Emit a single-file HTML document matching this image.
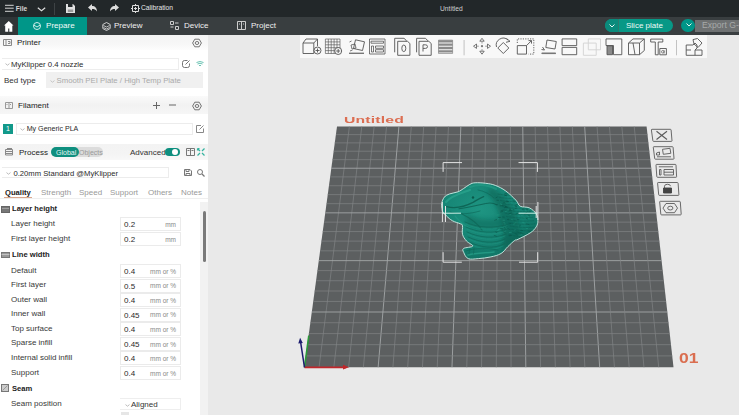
<!DOCTYPE html>
<html><head><meta charset="utf-8">
<style>
*{margin:0;padding:0;box-sizing:border-box}
html,body{width:739px;height:415px;overflow:hidden;background:#e9e9e9;font-family:"Liberation Sans",sans-serif;position:relative}
.a{position:absolute}
.wt{position:absolute;color:#e8e8e8;font-size:8px;white-space:nowrap;line-height:1}
.t{position:absolute;font-size:8px;color:#333;white-space:nowrap;line-height:1}
.inp{position:absolute;left:120px;width:61px;height:14px;border:1px solid #ebebeb;background:#fff}
.inp .v{position:absolute;left:3px;top:3px;font-size:8px;color:#2a2a2a;line-height:1}
.inp .u{position:absolute;right:4px;top:3.5px;font-size:6.5px;color:#888;line-height:1}
svg{position:absolute;overflow:visible}
</style></head><body>
<!-- title bar -->
<div class="a" style="left:0;top:0;width:739px;height:17px;background:#222729"></div>
<svg style="left:5px;top:4px" width="10" height="9"><path d="M0 1.3h8.7M0 4.2h8.7M0 7.3h8.7" stroke="#e8e8e8" stroke-width="0.9"/></svg>
<div class="wt" style="left:15.8px;top:5.5px;font-size:6.6px;font-weight:bold;color:#d8d8d8">File</div>
<svg style="left:37px;top:6.5px" width="10" height="5"><path d="M0.8 0.8l3.7 3 3.7-3" stroke="#e0e0e0" stroke-width="1.1" fill="none"/></svg>
<div class="a" style="left:54px;top:3px;width:1px;height:11.5px;background:#3e4345"></div>
<svg style="left:66px;top:4px" width="9" height="9"><path d="M0 0h7l2 2v7h-9z" fill="#e0e0e0"/><path d="M2 0v3h4.5v-3z" fill="#222729"/><path d="M1.8 5.5h5.4v2.5h-5.4z" fill="#999"/></svg>
<svg style="left:88px;top:4px" width="9" height="8"><path d="M0 3.5l4-3.5v2c3 0 5 2 5 5.5c-1-2-3-2.5-5-2.5v2z" fill="#ddd"/></svg>
<svg style="left:110px;top:4px" width="9" height="8"><path d="M9 3.5l-4-3.5v2c-3 0-5 2-5 5.5c1-2 3-2.5 5-2.5v2z" fill="#ddd"/></svg>
<svg style="left:131px;top:4px" width="9" height="9"><path d="M1.5 1.5h6v6h-6z M4.5 0v2 M4.5 7v2 M0 4.5h2 M7 4.5h2 M3 4.5h3 M4.5 3v3" stroke="#ddd" stroke-width="1" fill="none"/></svg>
<div class="wt" style="left:141px;top:5px;font-size:6.7px">Calibration</div>
<div class="wt" style="left:440px;top:5.8px;font-size:6.7px;color:#d0d0d0">Untitled</div>

<!-- tab bar -->
<div class="a" style="left:0;top:17px;width:739px;height:18px;background:#393e40"></div>
<div class="a" style="left:0;top:17px;width:18px;height:18px;background:#303537"></div>
<svg style="left:3.5px;top:20.6px" width="10" height="11"><path d="M4.75 0L0 4.6h1.2v6.1h3v-3.2h1.1v3.2h3v-6.1h1.2z" fill="#fff"/></svg>
<div class="a" style="left:18px;top:17px;width:69px;height:18px;background:#009688"></div>
<svg style="left:33px;top:22px" width="8" height="8"><circle cx="4" cy="4" r="3.5" stroke="#cfeee9" stroke-width="1" fill="none"/><path d="M0.8 3l3.2 2 3.2-2" stroke="#cfeee9" stroke-width="1" fill="none"/></svg>
<div class="wt" style="left:46px;top:22px;font-size:8.1px;color:#f2fbfa">Prepare</div>
<svg style="left:102px;top:21.5px" width="9" height="9"><path d="M4.5 0.5l3.7 2v4l-3.7 2-3.7-2v-4z" stroke="#ddd" stroke-width="0.9" fill="none"/><path d="M1.5 3.5l3 1.5 3-1.5 M1.5 5.5l3 1.5 3-1.5" stroke="#ddd" stroke-width="0.8" fill="none"/></svg>
<div class="wt" style="left:114px;top:22px;font-size:8px;color:#f0f0f0">Preview</div>
<svg style="left:170px;top:21px" width="9" height="9"><path d="M0.5 0.5h3v3h-3z M5.5 5.5h3v3h-3z M5 2h3.5 M0.5 6h3" stroke="#ccc" stroke-width="1" fill="none"/></svg>
<div class="wt" style="left:184px;top:22px;font-size:8px;color:#f0f0f0">Device</div>
<svg style="left:237px;top:21px" width="9" height="9"><path d="M0.5 0.5h8v8h-8z M4.5 0.5v8 M2 3h1 M6 3h1" stroke="#ccc" stroke-width="1" fill="none"/></svg>
<div class="wt" style="left:251px;top:22px;font-size:8px;color:#f0f0f0">Project</div>
<!-- slice plate -->
<div class="a" style="left:605px;top:19.3px;width:67.5px;height:12.7px;border-radius:6.5px;background:#079886"></div><div class="a" style="left:605px;top:19.3px;width:13px;height:12.7px;border-radius:6.5px 0 0 6.5px;background:#0a8b7c"></div>
<div class="a" style="left:617.5px;top:19.3px;width:0.8px;height:12.7px;background:#2c7a6e"></div>
<svg style="left:609px;top:24px" width="6" height="4"><path d="M0.5 0.5l2.5 2.5 2.5-2.5" stroke="#e6f5f3" stroke-width="1" fill="none"/></svg>
<div class="wt" style="left:626px;top:21.8px;font-size:8px;color:#eefaf7">Slice plate</div>
<div class="a" style="left:695px;top:19.5px;width:44px;height:12.5px;background:#6e7172"></div>
<div class="a" style="left:681px;top:19px;width:14px;height:13px;border-radius:7px;background:#009688"></div>
<svg style="left:686px;top:23px" width="6" height="4"><path d="M0.5 0.5l2.5 2.5 2.5-2.5" stroke="#e6f5f3" stroke-width="1" fill="none"/></svg>
<div class="wt" style="left:702px;top:21px;font-size:8.6px;color:#a7a9a9">Export G-code</div>

<!-- canvas -->
<svg style="left:0;top:0" width="739" height="415">
<polygon points="337.0,126.5 646.6,126.5 673.5,367.3 304.3,367.3" fill="#5c5f60"/>
<line x1="349.38" y1="126.50" x2="319.07" y2="367.30" stroke="#818485" stroke-width="0.7"/><line x1="335.90" y1="134.63" x2="647.51" y2="134.63" stroke="#818485" stroke-width="0.7"/><line x1="361.77" y1="126.50" x2="333.84" y2="367.30" stroke="#818485" stroke-width="0.7"/><line x1="334.78" y1="142.87" x2="648.43" y2="142.87" stroke="#818485" stroke-width="0.7"/><line x1="374.15" y1="126.50" x2="348.60" y2="367.30" stroke="#818485" stroke-width="0.7"/><line x1="333.64" y1="151.21" x2="649.36" y2="151.21" stroke="#818485" stroke-width="0.7"/><line x1="386.54" y1="126.50" x2="363.37" y2="367.30" stroke="#818485" stroke-width="0.7"/><line x1="332.50" y1="159.67" x2="650.30" y2="159.67" stroke="#818485" stroke-width="0.7"/><line x1="398.92" y1="126.50" x2="378.14" y2="367.30" stroke="#a3a6a7" stroke-width="0.9"/><line x1="331.33" y1="168.23" x2="651.26" y2="168.23" stroke="#a3a6a7" stroke-width="0.9"/><line x1="411.30" y1="126.50" x2="392.91" y2="367.30" stroke="#818485" stroke-width="0.7"/><line x1="330.15" y1="176.92" x2="652.23" y2="176.92" stroke="#818485" stroke-width="0.7"/><line x1="423.69" y1="126.50" x2="407.68" y2="367.30" stroke="#818485" stroke-width="0.7"/><line x1="328.96" y1="185.72" x2="653.22" y2="185.72" stroke="#818485" stroke-width="0.7"/><line x1="436.07" y1="126.50" x2="422.44" y2="367.30" stroke="#818485" stroke-width="0.7"/><line x1="327.75" y1="194.64" x2="654.21" y2="194.64" stroke="#818485" stroke-width="0.7"/><line x1="448.46" y1="126.50" x2="437.21" y2="367.30" stroke="#818485" stroke-width="0.7"/><line x1="326.52" y1="203.68" x2="655.22" y2="203.68" stroke="#818485" stroke-width="0.7"/><line x1="460.84" y1="126.50" x2="451.98" y2="367.30" stroke="#a3a6a7" stroke-width="0.9"/><line x1="325.27" y1="212.85" x2="656.25" y2="212.85" stroke="#a3a6a7" stroke-width="0.9"/><line x1="473.22" y1="126.50" x2="466.75" y2="367.30" stroke="#818485" stroke-width="0.7"/><line x1="324.01" y1="222.14" x2="657.28" y2="222.14" stroke="#818485" stroke-width="0.7"/><line x1="485.61" y1="126.50" x2="481.52" y2="367.30" stroke="#818485" stroke-width="0.7"/><line x1="322.73" y1="231.57" x2="658.34" y2="231.57" stroke="#818485" stroke-width="0.7"/><line x1="497.99" y1="126.50" x2="496.28" y2="367.30" stroke="#818485" stroke-width="0.7"/><line x1="321.43" y1="241.12" x2="659.40" y2="241.12" stroke="#818485" stroke-width="0.7"/><line x1="510.38" y1="126.50" x2="511.05" y2="367.30" stroke="#818485" stroke-width="0.7"/><line x1="320.12" y1="250.82" x2="660.49" y2="250.82" stroke="#818485" stroke-width="0.7"/><line x1="522.76" y1="126.50" x2="525.82" y2="367.30" stroke="#a3a6a7" stroke-width="0.9"/><line x1="318.78" y1="260.65" x2="661.59" y2="260.65" stroke="#a3a6a7" stroke-width="0.9"/><line x1="535.14" y1="126.50" x2="540.59" y2="367.30" stroke="#818485" stroke-width="0.7"/><line x1="317.43" y1="270.62" x2="662.70" y2="270.62" stroke="#818485" stroke-width="0.7"/><line x1="547.53" y1="126.50" x2="555.36" y2="367.30" stroke="#818485" stroke-width="0.7"/><line x1="316.05" y1="280.74" x2="663.83" y2="280.74" stroke="#818485" stroke-width="0.7"/><line x1="559.91" y1="126.50" x2="570.12" y2="367.30" stroke="#818485" stroke-width="0.7"/><line x1="314.66" y1="291.01" x2="664.98" y2="291.01" stroke="#818485" stroke-width="0.7"/><line x1="572.30" y1="126.50" x2="584.89" y2="367.30" stroke="#818485" stroke-width="0.7"/><line x1="313.25" y1="301.43" x2="666.14" y2="301.43" stroke="#818485" stroke-width="0.7"/><line x1="584.68" y1="126.50" x2="599.66" y2="367.30" stroke="#a3a6a7" stroke-width="0.9"/><line x1="311.81" y1="312.00" x2="667.32" y2="312.00" stroke="#a3a6a7" stroke-width="0.9"/><line x1="597.06" y1="126.50" x2="614.43" y2="367.30" stroke="#818485" stroke-width="0.7"/><line x1="310.35" y1="322.73" x2="668.52" y2="322.73" stroke="#818485" stroke-width="0.7"/><line x1="609.45" y1="126.50" x2="629.20" y2="367.30" stroke="#818485" stroke-width="0.7"/><line x1="308.87" y1="333.62" x2="669.74" y2="333.62" stroke="#818485" stroke-width="0.7"/><line x1="621.83" y1="126.50" x2="643.96" y2="367.30" stroke="#818485" stroke-width="0.7"/><line x1="307.37" y1="344.68" x2="670.97" y2="344.68" stroke="#818485" stroke-width="0.7"/><line x1="634.22" y1="126.50" x2="658.73" y2="367.30" stroke="#818485" stroke-width="0.7"/><line x1="305.85" y1="355.90" x2="672.23" y2="355.90" stroke="#818485" stroke-width="0.7"/>
</svg>
<svg style="left:0;top:0" width="739" height="415">
<defs><filter id="bl" x="-20%" y="-20%" width="140%" height="140%"><feGaussianBlur stdDeviation="2"/></filter><clipPath id="mc"><path d="M442.2,209.8 C442.0,208.3 441.3,205.8 441.7,203.5 C442.1,201.2 443.0,198.8 444.4,197.1 C445.8,195.4 447.2,194.9 449.7,193.9 C452.2,192.9 455.6,192.8 458.1,191.8 C460.6,190.8 461.4,189.9 463.5,188.6 C465.6,187.3 467.7,185.4 469.8,184.4 C471.9,183.4 472.2,183.0 475.1,182.8 C478.0,182.6 482.1,182.8 485.7,183.3 C489.3,183.8 491.7,184.0 495.3,185.4 C498.9,186.8 502.1,188.3 505.8,191.0 C509.5,193.7 513.4,197.6 516.0,200.3 C518.6,203.0 517.8,204.8 520.2,206.2 C522.6,207.6 526.5,206.5 529.4,207.9 C532.3,209.3 534.7,211.5 536.2,213.8 C537.7,216.1 537.9,218.1 537.9,220.5 C537.9,222.9 537.6,224.7 536.2,226.9 C534.8,229.1 533.5,230.7 530.2,232.9 C526.9,235.1 520.8,237.9 518.0,239.3 C515.2,240.7 516.4,239.2 514.6,240.5 C512.8,241.8 510.2,244.4 507.8,246.7 C505.4,249.0 504.1,251.7 501.0,253.5 C497.9,255.3 494.9,256.0 490.8,256.9 C486.7,257.8 482.5,258.3 478.4,258.6 C474.3,258.9 470.8,259.7 468.2,258.6 C465.6,257.5 464.5,254.2 463.7,252.4 C462.9,250.6 462.1,249.5 463.7,248.4 C465.3,247.3 472.2,247.4 472.7,246.1 C473.2,244.8 468.3,243.1 466.5,241.0 C464.7,238.9 463.2,237.0 462.5,234.3 C461.8,231.6 462.9,227.7 462.5,225.8 C462.1,223.9 462.2,224.7 460.4,223.8 C458.6,222.9 455.0,222.2 452.5,220.8 C450.0,219.4 448.2,217.6 446.5,216.0 C444.8,214.4 443.8,213.1 443.0,212.0 C442.2,210.9 442.4,211.3 442.2,209.8Z"/></clipPath>
<radialGradient id="mg" cx="0.4" cy="0.35" r="0.7"><stop offset="0" stop-color="#1e9582"/><stop offset="0.6" stop-color="#168474"/><stop offset="1" stop-color="#107263"/></radialGradient></defs>
<path d="M442.2,209.8 C442.0,208.3 441.3,205.8 441.7,203.5 C442.1,201.2 443.0,198.8 444.4,197.1 C445.8,195.4 447.2,194.9 449.7,193.9 C452.2,192.9 455.6,192.8 458.1,191.8 C460.6,190.8 461.4,189.9 463.5,188.6 C465.6,187.3 467.7,185.4 469.8,184.4 C471.9,183.4 472.2,183.0 475.1,182.8 C478.0,182.6 482.1,182.8 485.7,183.3 C489.3,183.8 491.7,184.0 495.3,185.4 C498.9,186.8 502.1,188.3 505.8,191.0 C509.5,193.7 513.4,197.6 516.0,200.3 C518.6,203.0 517.8,204.8 520.2,206.2 C522.6,207.6 526.5,206.5 529.4,207.9 C532.3,209.3 534.7,211.5 536.2,213.8 C537.7,216.1 537.9,218.1 537.9,220.5 C537.9,222.9 537.6,224.7 536.2,226.9 C534.8,229.1 533.5,230.7 530.2,232.9 C526.9,235.1 520.8,237.9 518.0,239.3 C515.2,240.7 516.4,239.2 514.6,240.5 C512.8,241.8 510.2,244.4 507.8,246.7 C505.4,249.0 504.1,251.7 501.0,253.5 C497.9,255.3 494.9,256.0 490.8,256.9 C486.7,257.8 482.5,258.3 478.4,258.6 C474.3,258.9 470.8,259.7 468.2,258.6 C465.6,257.5 464.5,254.2 463.7,252.4 C462.9,250.6 462.1,249.5 463.7,248.4 C465.3,247.3 472.2,247.4 472.7,246.1 C473.2,244.8 468.3,243.1 466.5,241.0 C464.7,238.9 463.2,237.0 462.5,234.3 C461.8,231.6 462.9,227.7 462.5,225.8 C462.1,223.9 462.2,224.7 460.4,223.8 C458.6,222.9 455.0,222.2 452.5,220.8 C450.0,219.4 448.2,217.6 446.5,216.0 C444.8,214.4 443.8,213.1 443.0,212.0 C442.2,210.9 442.4,211.3 442.2,209.8Z" fill="url(#mg)"/>
<g clip-path="url(#mc)" fill="none" stroke-linecap="round">
<path d="M492,188 C506,196 518,210 521,236 L502,254 C506,232 500,205 486,192 Z" fill="#0c6454" opacity="0.6" stroke="none" filter="url(#bl)"/>
<path d="M466,214 C478,220 492,222 504,216 L506,226 C494,230 478,230 466,224 Z" fill="#0c6454" opacity="0.45" stroke="none" filter="url(#bl)"/>
<path d="M505,238 C515,236 525,232 532,226 L534,234 C526,240 514,244 504,246 Z" fill="#0c6454" opacity="0.4" stroke="none" filter="url(#bl)"/>

<path d="M502.6,217.0 l1.6,0.2" stroke="#0a5548" stroke-width="0.8" opacity="0.7"/>
<path d="M516.5,195.0 l1.0,0.5" stroke="#0a5548" stroke-width="0.8" opacity="0.7"/>
<path d="M503.3,202.8 l2.5,-0.0" stroke="#0a5548" stroke-width="0.8" opacity="0.7"/>
<path d="M524.1,213.9 l2.0,-0.6" stroke="#0a5548" stroke-width="0.8" opacity="0.7"/>
<path d="M516.9,231.9 l1.8,0.4" stroke="#0a5548" stroke-width="0.8" opacity="0.7"/>
<path d="M518.2,194.9 l2.1,0.1" stroke="#0a5548" stroke-width="0.8" opacity="0.7"/>
<path d="M504.8,193.4 l2.3,-0.0" stroke="#0a5548" stroke-width="0.8" opacity="0.7"/>
<path d="M519.9,232.4 l2.1,0.7" stroke="#0a5548" stroke-width="0.8" opacity="0.7"/>
<path d="M508.2,228.8 l1.7,0.7" stroke="#0a5548" stroke-width="0.8" opacity="0.7"/>
<path d="M525.6,196.5 l1.2,-0.5" stroke="#0a5548" stroke-width="0.8" opacity="0.7"/>
<path d="M528.8,212.1 l1.9,-0.3" stroke="#0a5548" stroke-width="0.8" opacity="0.7"/>
<path d="M512.3,209.7 l1.5,0.1" stroke="#0a5548" stroke-width="0.8" opacity="0.7"/>
<path d="M515.0,233.6 l2.0,0.7" stroke="#0a5548" stroke-width="0.8" opacity="0.7"/>
<path d="M524.8,237.6 l2.0,-0.5" stroke="#0a5548" stroke-width="0.8" opacity="0.7"/>
<path d="M525.0,236.4 l2.4,0.1" stroke="#0a5548" stroke-width="0.8" opacity="0.7"/>
<path d="M519.7,201.7 l2.2,0.1" stroke="#0a5548" stroke-width="0.8" opacity="0.7"/>
<path d="M504.3,194.9 l2.3,0.8" stroke="#0a5548" stroke-width="0.8" opacity="0.7"/>
<path d="M497.2,228.8 l1.6,-0.6" stroke="#0a5548" stroke-width="0.8" opacity="0.7"/>
<path d="M504.6,227.4 l2.3,-0.7" stroke="#0a5548" stroke-width="0.8" opacity="0.7"/>
<path d="M516.1,194.1 l2.1,-0.3" stroke="#0a5548" stroke-width="0.8" opacity="0.7"/>
<path d="M525.7,237.1 l1.8,0.8" stroke="#0a5548" stroke-width="0.8" opacity="0.7"/>
<path d="M505.1,195.5 l1.9,-0.7" stroke="#0a5548" stroke-width="0.8" opacity="0.7"/>
<path d="M501.1,210.8 l1.9,-0.6" stroke="#0a5548" stroke-width="0.8" opacity="0.7"/>
<path d="M495.5,231.9 l1.5,0.7" stroke="#0a5548" stroke-width="0.8" opacity="0.7"/>
<path d="M526.3,209.4 l1.7,0.0" stroke="#0a5548" stroke-width="0.8" opacity="0.7"/>
<path d="M517.2,219.4 l1.8,0.2" stroke="#0a5548" stroke-width="0.8" opacity="0.7"/>
<path d="M527.9,215.3 l1.6,0.4" stroke="#0a5548" stroke-width="0.8" opacity="0.7"/>
<path d="M502.6,205.8 l2.5,0.0" stroke="#0a5548" stroke-width="0.8" opacity="0.7"/>
<path d="M513.7,192.5 l1.6,0.1" stroke="#0a5548" stroke-width="0.8" opacity="0.7"/>
<path d="M494.7,220.3 l1.9,-0.7" stroke="#0a5548" stroke-width="0.8" opacity="0.7"/>
<path d="M516.6,213.4 l2.0,-0.2" stroke="#0a5548" stroke-width="0.8" opacity="0.7"/>
<path d="M519.5,225.9 l1.0,-0.7" stroke="#0a5548" stroke-width="0.8" opacity="0.7"/>
<path d="M518.3,236.3 l1.4,-0.1" stroke="#0a5548" stroke-width="0.8" opacity="0.7"/>
<path d="M515.3,206.7 l1.5,-0.3" stroke="#0a5548" stroke-width="0.8" opacity="0.7"/>
<path d="M507.3,219.4 l1.5,-0.2" stroke="#0a5548" stroke-width="0.8" opacity="0.7"/>
<path d="M521.8,193.2 l1.9,0.4" stroke="#0a5548" stroke-width="0.8" opacity="0.7"/>
<path d="M505.2,202.2 l2.2,-0.4" stroke="#0a5548" stroke-width="0.8" opacity="0.7"/>
<path d="M500.7,212.0 l2.0,-0.6" stroke="#0a5548" stroke-width="0.8" opacity="0.7"/>
<path d="M505.6,207.4 l2.3,-0.1" stroke="#0a5548" stroke-width="0.8" opacity="0.7"/>
<path d="M524.8,199.8 l1.5,0.2" stroke="#0a5548" stroke-width="0.8" opacity="0.7"/>
<path d="M525.9,212.8 l1.3,-0.6" stroke="#0a5548" stroke-width="0.8" opacity="0.7"/>
<path d="M513.1,200.8 l2.2,0.5" stroke="#0a5548" stroke-width="0.8" opacity="0.7"/>
<path d="M500.6,204.8 l2.2,0.2" stroke="#0a5548" stroke-width="0.8" opacity="0.7"/>
<path d="M523.0,207.9 l1.2,-0.3" stroke="#0a5548" stroke-width="0.8" opacity="0.7"/>
<path d="M522.6,204.5 l1.5,-0.1" stroke="#0a5548" stroke-width="0.8" opacity="0.7"/>
<path d="M509.1,210.8 l2.4,-0.6" stroke="#0a5548" stroke-width="0.8" opacity="0.7"/>
<path d="M494.2,235.4 l2.3,0.8" stroke="#0a5548" stroke-width="0.8" opacity="0.7"/>
<path d="M509.6,235.7 l2.4,-0.4" stroke="#0a5548" stroke-width="0.8" opacity="0.7"/>
<path d="M520.8,230.5 l2.0,0.0" stroke="#0a5548" stroke-width="0.8" opacity="0.7"/>
<path d="M504.4,207.7 l1.3,-0.7" stroke="#0a5548" stroke-width="0.8" opacity="0.7"/>
<path d="M515.2,205.2 l2.2,-0.7" stroke="#0a5548" stroke-width="0.8" opacity="0.7"/>
<path d="M526.5,223.9 l2.4,0.6" stroke="#0a5548" stroke-width="0.8" opacity="0.7"/>
<path d="M526.4,218.5 l1.0,0.4" stroke="#0a5548" stroke-width="0.8" opacity="0.7"/>
<path d="M500.2,205.8 l2.0,0.0" stroke="#0a5548" stroke-width="0.8" opacity="0.7"/>
<path d="M508.9,235.2 l1.9,-0.3" stroke="#0a5548" stroke-width="0.8" opacity="0.7"/>
<path d="M503.1,231.6 l1.7,0.5" stroke="#0a5548" stroke-width="0.8" opacity="0.7"/>
<path d="M506.7,201.1 l1.8,0.5" stroke="#0a5548" stroke-width="0.8" opacity="0.7"/>
<path d="M500.2,228.4 l2.4,0.5" stroke="#0a5548" stroke-width="0.8" opacity="0.7"/>
<path d="M523.6,192.3 l1.9,0.6" stroke="#0a5548" stroke-width="0.8" opacity="0.7"/>
<path d="M495.8,204.5 l1.4,0.0" stroke="#0a5548" stroke-width="0.8" opacity="0.7"/>
<path d="M509.2,213.8 l2.2,-0.8" stroke="#0a5548" stroke-width="0.8" opacity="0.7"/>
<path d="M496.0,197.8 l1.2,-0.7" stroke="#0a5548" stroke-width="0.8" opacity="0.7"/>
<path d="M529.1,231.3 l1.1,0.0" stroke="#0a5548" stroke-width="0.8" opacity="0.7"/>
<path d="M505.4,206.5 l1.5,0.2" stroke="#0a5548" stroke-width="0.8" opacity="0.7"/>
<path d="M515.1,208.6 l1.3,-0.3" stroke="#0a5548" stroke-width="0.8" opacity="0.7"/>
<path d="M498.5,217.6 l2.1,-0.2" stroke="#0a5548" stroke-width="0.8" opacity="0.7"/>
<path d="M496.9,200.2 l1.6,0.2" stroke="#0a5548" stroke-width="0.8" opacity="0.7"/>
<path d="M522.2,209.5 l2.2,0.2" stroke="#0a5548" stroke-width="0.8" opacity="0.7"/>
<path d="M509.5,209.1 l1.7,0.3" stroke="#0a5548" stroke-width="0.8" opacity="0.7"/>
<path d="M509.1,223.9 l1.7,-0.4" stroke="#0a5548" stroke-width="0.8" opacity="0.7"/>
<path d="M513.3,224.0 l1.1,-0.1" stroke="#2aa38c" stroke-width="0.7" opacity="0.6"/>
<path d="M509.3,232.5 l1.9,-0.2" stroke="#2aa38c" stroke-width="0.7" opacity="0.6"/>
<path d="M526.3,228.4 l1.3,-0.0" stroke="#2aa38c" stroke-width="0.7" opacity="0.6"/>
<path d="M498.4,229.4 l1.7,0.5" stroke="#2aa38c" stroke-width="0.7" opacity="0.6"/>
<path d="M522.5,222.7 l1.7,0.1" stroke="#2aa38c" stroke-width="0.7" opacity="0.6"/>
<path d="M497.7,219.0 l1.0,-0.4" stroke="#2aa38c" stroke-width="0.7" opacity="0.6"/>
<path d="M521.9,194.0 l1.1,-0.5" stroke="#2aa38c" stroke-width="0.7" opacity="0.6"/>
<path d="M525.7,200.2 l1.0,0.4" stroke="#2aa38c" stroke-width="0.7" opacity="0.6"/>
<path d="M498.4,230.8 l1.7,0.4" stroke="#2aa38c" stroke-width="0.7" opacity="0.6"/>
<path d="M528.3,218.6 l1.8,-0.6" stroke="#2aa38c" stroke-width="0.7" opacity="0.6"/>
<path d="M521.6,215.5 l1.7,-0.5" stroke="#2aa38c" stroke-width="0.7" opacity="0.6"/>
<path d="M521.0,235.0 l1.1,-0.2" stroke="#2aa38c" stroke-width="0.7" opacity="0.6"/>
<path d="M514.3,230.1 l1.2,-0.4" stroke="#2aa38c" stroke-width="0.7" opacity="0.6"/>
<path d="M503.0,220.3 l1.8,-0.1" stroke="#2aa38c" stroke-width="0.7" opacity="0.6"/>
<path d="M507.2,210.2 l1.4,-0.1" stroke="#2aa38c" stroke-width="0.7" opacity="0.6"/>
<path d="M497.0,215.0 l2.0,-0.1" stroke="#2aa38c" stroke-width="0.7" opacity="0.6"/>
<path d="M520.9,199.4 l1.7,0.3" stroke="#2aa38c" stroke-width="0.7" opacity="0.6"/>
<path d="M518.3,215.8 l1.5,0.2" stroke="#2aa38c" stroke-width="0.7" opacity="0.6"/>
<path d="M526.3,198.9 l1.1,0.3" stroke="#2aa38c" stroke-width="0.7" opacity="0.6"/>
<path d="M527.0,215.8 l1.4,0.3" stroke="#2aa38c" stroke-width="0.7" opacity="0.6"/>
<path d="M500.7,204.3 l1.2,0.1" stroke="#2aa38c" stroke-width="0.7" opacity="0.6"/>
<path d="M505.3,202.7 l1.7,0.5" stroke="#2aa38c" stroke-width="0.7" opacity="0.6"/>
<path d="M504.7,224.4 l1.4,0.4" stroke="#2aa38c" stroke-width="0.7" opacity="0.6"/>
<path d="M515.0,204.3 l1.2,-0.6" stroke="#2aa38c" stroke-width="0.7" opacity="0.6"/>
<path d="M511.3,209.6 l1.2,-0.2" stroke="#2aa38c" stroke-width="0.7" opacity="0.6"/>
<path d="M505.6,227.6 l1.1,0.6" stroke="#2aa38c" stroke-width="0.7" opacity="0.6"/>
<path d="M511.3,219.6 l1.5,0.4" stroke="#2aa38c" stroke-width="0.7" opacity="0.6"/>
<path d="M523.6,217.6 l1.5,0.3" stroke="#2aa38c" stroke-width="0.7" opacity="0.6"/>
<path d="M524.8,210.4 l1.7,0.6" stroke="#2aa38c" stroke-width="0.7" opacity="0.6"/>
<path d="M510.8,202.6 l1.2,0.3" stroke="#2aa38c" stroke-width="0.7" opacity="0.6"/>
<path d="M518.3,236.1 l1.9,-0.3" stroke="#2aa38c" stroke-width="0.7" opacity="0.6"/>
<path d="M500.8,203.9 l1.2,0.2" stroke="#2aa38c" stroke-width="0.7" opacity="0.6"/>
<path d="M524.9,233.4 l1.3,0.4" stroke="#2aa38c" stroke-width="0.7" opacity="0.6"/>
<path d="M505.3,211.5 l1.7,-0.5" stroke="#2aa38c" stroke-width="0.7" opacity="0.6"/>
<path d="M497.3,230.4 l1.3,-0.2" stroke="#2aa38c" stroke-width="0.7" opacity="0.6"/>
<path d="M514.9,223.1 l1.0,-0.2" stroke="#2aa38c" stroke-width="0.7" opacity="0.6"/>
<path d="M509.7,214.4 l1.2,0.1" stroke="#2aa38c" stroke-width="0.7" opacity="0.6"/>
<path d="M528.4,210.0 l1.5,-0.5" stroke="#2aa38c" stroke-width="0.7" opacity="0.6"/>
<path d="M503.9,222.6 l1.1,0.5" stroke="#2aa38c" stroke-width="0.7" opacity="0.6"/>
<path d="M526.7,196.5 l1.9,-0.2" stroke="#2aa38c" stroke-width="0.7" opacity="0.6"/>
<path d="M498.0,194.0 C506.0,195.5 516.0,196.0 524.0,195.0" stroke="#0b5a4c" stroke-width="0.7" opacity="0.55" stroke-dasharray="2,1.2"/>
<path d="M499.2,197.2 C507.2,198.7 517.2,199.2 525.2,198.2" stroke="#0b5a4c" stroke-width="0.7" opacity="0.55" stroke-dasharray="2,1.2"/>
<path d="M500.4,200.4 C508.4,201.9 518.4,202.4 526.4,201.4" stroke="#0b5a4c" stroke-width="0.7" opacity="0.55" stroke-dasharray="2,1.2"/>
<path d="M501.6,203.6 C509.6,205.1 519.6,205.6 527.6,204.6" stroke="#0b5a4c" stroke-width="0.7" opacity="0.55" stroke-dasharray="2,1.2"/>
<path d="M502.8,206.8 C510.8,208.3 520.8,208.8 528.8,207.8" stroke="#0b5a4c" stroke-width="0.7" opacity="0.55" stroke-dasharray="2,1.2"/>
<path d="M504.0,210.0 C512.0,211.5 522.0,212.0 530.0,211.0" stroke="#0b5a4c" stroke-width="0.7" opacity="0.55" stroke-dasharray="2,1.2"/>
<path d="M505.2,213.2 C513.2,214.7 523.2,215.2 531.2,214.2" stroke="#0b5a4c" stroke-width="0.7" opacity="0.55" stroke-dasharray="2,1.2"/>
<path d="M506.4,216.4 C514.4,217.9 524.4,218.4 532.4,217.4" stroke="#0b5a4c" stroke-width="0.7" opacity="0.55" stroke-dasharray="2,1.2"/>
<path d="M507.6,219.6 C515.6,221.1 525.6,221.6 533.6,220.6" stroke="#0b5a4c" stroke-width="0.7" opacity="0.55" stroke-dasharray="2,1.2"/>
<path d="M508.8,222.8 C516.8,224.3 526.8,224.8 534.8,223.8" stroke="#0b5a4c" stroke-width="0.7" opacity="0.55" stroke-dasharray="2,1.2"/>
<path d="M510.0,226.0 C518.0,227.5 528.0,228.0 536.0,227.0" stroke="#0b5a4c" stroke-width="0.7" opacity="0.55" stroke-dasharray="2,1.2"/>
<path d="M511.2,229.2 C519.2,230.7 529.2,231.2 537.2,230.2" stroke="#0b5a4c" stroke-width="0.7" opacity="0.55" stroke-dasharray="2,1.2"/>
<path d="M512.4,232.4 C520.4,233.9 530.4,234.4 538.4,233.4" stroke="#0b5a4c" stroke-width="0.7" opacity="0.55" stroke-dasharray="2,1.2"/>
<path d="M513.6,235.6 C521.6,237.1 531.6,237.6 539.6,236.6" stroke="#0b5a4c" stroke-width="0.7" opacity="0.55" stroke-dasharray="2,1.2"/>
<path d="M446,202 C452,195 462,193 470,190" stroke="#2fae95" stroke-width="2.2" opacity="0.55"/>
<path d="M470,187 C478,184 488,185 496,189" stroke="#2aa38c" stroke-width="2" opacity="0.5"/>
<path d="M446.5,206.6 C456,209 466,206 473,202.4 C477,200 480,198 483.6,196.6" stroke="#0c5f50" stroke-width="1.3" opacity="0.85"/>
<path d="M459,208.8 C468,208 478,205 485.7,203.5 C490,202.5 494,203 497,205" stroke="#0c5f50" stroke-width="1.1" opacity="0.8"/>
<path d="M450,212 C458,215 470,214 480,211" stroke="#0e6556" stroke-width="1" opacity="0.6"/>
<circle cx="473" cy="197.5" r="1.2" fill="#0b5a4c" stroke="none"/>
<path d="M478,190 C484,191 490,194 494,198" stroke="#0e6556" stroke-width="1" opacity="0.6"/>
<path d="M462,214 C470,218 478,224 482,230" stroke="#0e6556" stroke-width="1.2" opacity="0.7"/>
<path d="M455,216 C460,222 464,226 470,228" stroke="#27a089" stroke-width="1.2" opacity="0.5"/>
<path d="M465,222 C478,228 494,229 508,224" stroke="#0e6657" stroke-width="1" opacity="0.7"/>
<path d="M466,224.2 C478,230 494,231 507,226" stroke="#26a08a" stroke-width="0.8" opacity="0.45"/>
<path d="M466,227 C479,233 494,234 507,229" stroke="#0e6657" stroke-width="1" opacity="0.7"/>
<path d="M467,229.2 C479,235 494,236 506,231" stroke="#26a08a" stroke-width="0.8" opacity="0.45"/>
<path d="M467,232 C480,238 494,239 506,234" stroke="#0e6657" stroke-width="1" opacity="0.7"/>
<path d="M468,234.2 C480,240 494,241 505,236" stroke="#26a08a" stroke-width="0.8" opacity="0.45"/>
<path d="M468,237 C481,243 494,244 505,239" stroke="#0e6657" stroke-width="1" opacity="0.7"/>
<path d="M469,239.2 C481,245 494,246 504,241" stroke="#26a08a" stroke-width="0.8" opacity="0.45"/>
<path d="M469,242 C482,248 494,249 504,244" stroke="#0e6657" stroke-width="1" opacity="0.7"/>
<path d="M470,244.2 C482,250 494,251 503,246" stroke="#26a08a" stroke-width="0.8" opacity="0.45"/>
<path d="M466,251 C474,248 486,248 498,250" stroke="#0e6657" stroke-width="1" opacity="0.6"/>
<path d="M468,255 C476,253 486,253 494,252" stroke="#2fae95" stroke-width="1.6" opacity="0.55"/>
<path d="M470,248 l-1,6 M474,248 l-0.5,6" stroke="#0e6657" stroke-width="0.8" opacity="0.6"/>
</g>
<path d="M442.2,209.8 C442.0,208.3 441.3,205.8 441.7,203.5 C442.1,201.2 443.0,198.8 444.4,197.1 C445.8,195.4 447.2,194.9 449.7,193.9 C452.2,192.9 455.6,192.8 458.1,191.8 C460.6,190.8 461.4,189.9 463.5,188.6 C465.6,187.3 467.7,185.4 469.8,184.4 C471.9,183.4 472.2,183.0 475.1,182.8 C478.0,182.6 482.1,182.8 485.7,183.3 C489.3,183.8 491.7,184.0 495.3,185.4 C498.9,186.8 502.1,188.3 505.8,191.0 C509.5,193.7 513.4,197.6 516.0,200.3 C518.6,203.0 517.8,204.8 520.2,206.2 C522.6,207.6 526.5,206.5 529.4,207.9 C532.3,209.3 534.7,211.5 536.2,213.8 C537.7,216.1 537.9,218.1 537.9,220.5 C537.9,222.9 537.6,224.7 536.2,226.9 C534.8,229.1 533.5,230.7 530.2,232.9 C526.9,235.1 520.8,237.9 518.0,239.3 C515.2,240.7 516.4,239.2 514.6,240.5 C512.8,241.8 510.2,244.4 507.8,246.7 C505.4,249.0 504.1,251.7 501.0,253.5 C497.9,255.3 494.9,256.0 490.8,256.9 C486.7,257.8 482.5,258.3 478.4,258.6 C474.3,258.9 470.8,259.7 468.2,258.6 C465.6,257.5 464.5,254.2 463.7,252.4 C462.9,250.6 462.1,249.5 463.7,248.4 C465.3,247.3 472.2,247.4 472.7,246.1 C473.2,244.8 468.3,243.1 466.5,241.0 C464.7,238.9 463.2,237.0 462.5,234.3 C461.8,231.6 462.9,227.7 462.5,225.8 C462.1,223.9 462.2,224.7 460.4,223.8 C458.6,222.9 455.0,222.2 452.5,220.8 C450.0,219.4 448.2,217.6 446.5,216.0 C444.8,214.4 443.8,213.1 443.0,212.0 C442.2,210.9 442.4,211.3 442.2,209.8Z" fill="none" stroke="#cdeee6" stroke-width="0.9"/>
<g stroke="#e4e4e4" stroke-width="1" fill="none">
<path d="M443.1,171.9 V162.6 H462"/>
<path d="M518.5,162.6 H537.4 V171.9"/>
<path d="M443.1,252.2 V262.2 H461.8"/>
<path d="M519,262.2 H537.7 V252.2"/>
<path d="M442.4,202 V222 M445.5,206 V222"/>
<path d="M537.9,202 V220 M536.2,206 V218"/>
</g>
<path d="M442.4,213.2 H461 M518.5,213.2 H537.5" stroke="#cff3ea" stroke-width="1"/>
</svg>
<div class="a" style="left:300px;top:35px;width:407px;height:23px;background:#f8f8f8"></div>
<svg style="left:0;top:0" width="739" height="60"><g fill="none" stroke="#555" stroke-width="0.9" stroke-linejoin="round">
<!-- cube+ -->
<path d="M303,43 H313.8 V53.5 H303 Z M303,43 L306,39 H317.5 L313.8,43 M317.5,39 V46"/>
<circle cx="317.5" cy="50.5" r="3.5" fill="#f8f8f8"/><path d="M315.5,50.5h4M317.5,48.5v4"/>
<!-- grid+ -->
<path d="M325.4,39 H340 V53.5 H325.4 Z M328.3,39V53.5 M331.2,39V53.5 M334.1,39V53.5 M337,39V53.5 M325.4,41.9H340 M325.4,44.8H340 M325.4,47.7H340 M325.4,50.6H340" stroke-width="0.65"/>
<circle cx="338.2" cy="51" r="3.5" fill="#f8f8f8"/><path d="M336.2,51h4M338.2,49v4"/>
<!-- arrange -->
<path d="M355.5,39.8 L364.5,41.8 L362.5,50.5 L353.5,48.5 Z"/>
<path d="M351,45 L355,44 L356,48 L352,49 Z M349.5,42 l2,-1 M350,51 l2.5,-1" stroke-width="0.8"/>
<path d="M349,53.3 H364" stroke-width="1.4" stroke="#777"/>
<!-- layout -->
<path d="M369.5,39 H385 V54 H369.5 Z M371,41.2 H383.5 V43.2 H371 Z M371.5,46 H373.5 V52 H371.5 Z M375.5,46 H383.5 V48.3 H375.5 Z M375.5,49.7 H383.5 V52 H375.5 Z" stroke-width="0.8"/>
<!-- plate 0 -->
<path d="M394.7,52.3 V38.3 H404 L406.3,40.5 V41.3 M397.7,41.3 H407.5 L409.9,43.5 V55.3 H397.7 Z"/>
<ellipse cx="403.8" cy="48.3" rx="2" ry="3.3"/>
<!-- plate P -->
<path d="M416.6,52.3 V38.3 H425.5 L427.6,40.5 V41.3 M419,41.3 H428.8 L431.2,43.5 V55.3 H419 Z M423,51.5 V44.8 H425.5 Q427.5,44.8 427.5,46.6 Q427.5,48.4 425.5,48.4 H423"/>
<!-- layers -->
<path d="M438.5,41.3 H452.6 M438.5,44.65 H452.6 M438.5,48 H452.6 M438.5,51.35 H452.6" stroke-width="2.3" stroke="#8a8a8a"/><path d="M438.5,40.1 H452.6 V53.5 H438.5 Z" stroke-width="0.6" stroke="#777"/>
<path d="M464.1,40 V55.3" stroke="#bbb"/>
<!-- move -->
<path d="M482,38.3 L484.2,41.2 H479.8 Z M482,54.2 L484.2,51.2 H479.8 Z M473.5,46.2 L476.5,44 V48.4 Z M490.5,46.2 L487.5,44 V48.4 Z" stroke-width="0.8"/>
<path d="M482,41.5 V43.5 M482,49 V51 M476.5,46.2 H478.8 M485.2,46.2 H487.5" stroke-width="0.8" stroke="#888"/>
<circle cx="482" cy="46.2" r="1.1" fill="#777" stroke="none"/>
<!-- rotate -->
<path d="M503.3,42.5 L508.8,48 L503.3,53.5 L497.8,48 Z M496.5,47 A7,7 0 0 1 508,40 M506.5,38.5 L510,41.3 L506,42.3"/>
<!-- scale -->
<path d="M517.3,45.6 H526.5 V54.1 H517.3 Z" />
<path d="M517.3,43 V38.9 H533.8 V54.1 H528.5" stroke-dasharray="1.2,1.2"/>
<path d="M526.5,45.6 L531.5,40.6 M528.5,40.6 H531.5 V43.6"/>
<!-- lay on face -->
<path d="M547,40 L556.3,41.5 L555,49 L545.8,47.5 Z M541.7,53.5 H555.7 M542.5,47 L544.5,50 M541.5,49.5 l3,0.5" />
<path d="M541.7,53.3 H555.7" stroke-width="1.6" stroke="#777"/>
<!-- split -->
<path d="M562.1,38.9 H576.7 V45.6 H562.1 Z M562.1,47.4 H576.7 V54.7 H562.1 Z"/>
<!-- boolean faded -->
<path d="M583.4,43.1 H596.2 V55.3 H583.4 Z M588.3,38.9 H600.5 V49.8 H588.3 Z" stroke="#d2d2d2"/>
<!-- cut -->
<path d="M606,38.9 H621.8 V54.7 H613.5 V45.5 H606 Z"/>
<rect x="607" y="45.8" width="5.5" height="8.9" fill="#8a8a8a" stroke="#555"/>
<!-- cube -->
<path d="M628.5,43 H639.5 V54.7 H628.5 Z M628.5,43 L633,38.9 H644.3 L639.5,43 M644.3,38.9 V50.5 L639.5,54.7 M633,43 L635,54.7" />
<!-- T -->
<path d="M650.7,39.1 H662.8 V42 H658.2 V54.8 H655.3 V42 H650.7 Z"/>
<path d="M659.8,48.5 H666.4 V54.8 H659.8 Z" fill="#f8f8f8"/>
<path d="M661.5,51.8 a1.3,1.3 0 1 0 2.6,0 a1.3,1.3 0 1 0 -2.6,0 M664.1,50.2 V53.5" stroke-width="0.7"/>
<path d="M676.5,40 V55.3" stroke="#bbb"/>
<!-- assembly -->
<path d="M686.2,45 H693 L695,43 L697,45 V48 L695,50 V55.3 H686.2 Z M686.2,50 H691 M693,39.6 L697.5,38.5 L702,43 L698,47.5 L694,44 Z M695,50 H702 V55.3 H695"/>
</g></svg>
<svg style="left:0;top:0" width="739" height="415"><g fill="none" stroke="#5a5a5a" stroke-width="0.9" stroke-linejoin="round">
<path d="M652,129.3 H670.3 Q671,129.3 671.1,130 L672,140.8 Q672,141.4 671.3,141.4 H653.6 Q653,141.4 652.9,140.8 L651.4,130 Q651.3,129.3 652,129.3 Z"/>
<path d="M656.5,131.3 L667,139.5 M667,131.3 L656.5,139.5" stroke-width="1.1"/>
<path d="M654,146.7 H672.3 Q673,146.7 673.1,147.4 L674,158.5 Q674,159.2 673.3,159.2 H655.5 Q654.8,159.2 654.7,158.5 L653.3,147.4 Q653.2,146.7 654,146.7 Z"/>
<path d="M662.5,149.3 L670,148.3 L670.8,153.3 L663.3,154.3 Z M656.5,153 l3,-1 v3 h-3 z M657,156.8 H671" />
<path d="M656.6,164.4 H675.2 Q676,164.4 676,165.1 L676.6,176.6 Q676.6,177.3 675.9,177.3 H657.6 Q656.9,177.3 656.8,176.6 L656,165.1 Q655.9,164.4 656.6,164.4 Z"/>
<path d="M658.8,166.8 H673 M659.5,169.5 V175 H661 V169.5 Z M664,169.5 H673.5 V175 H664 Z M664,172.2 H673.5"/>
<path d="M658.2,182.5 H677.3 Q678,182.5 678.1,183.2 L678.9,194.7 Q678.9,195.4 678.2,195.4 H659.5 Q658.8,195.4 658.7,194.7 L657.6,183.2 Q657.5,182.5 658.2,182.5 Z"/>
<path d="M664.5,188 V186.2 Q664.5,184.3 667.5,184.3 Q670.5,184.3 670.5,186.2"/>
<rect x="663.5" y="188" width="8" height="5" fill="#444" stroke="#444"/>
<path d="M660.4,201.3 H679.5 Q680.2,201.3 680.3,202 L681.2,214.2 Q681.2,214.9 680.5,214.9 H661.6 Q660.9,214.9 660.8,214.2 L659.7,202 Q659.6,201.3 660.4,201.3 Z"/>
<path d="M666,203.5 H674.5 L677.5,208.1 L674.5,212.7 H666 L663,208.1 Z"/>
<ellipse cx="670.3" cy="208.1" rx="2.6" ry="1.9"/>
</g>
<!-- axes -->
<path d="M304.5,367.3 L308.8,335.6" stroke="#2a9a3a" stroke-width="1.6"/>
<path d="M304.5,367.3 H346" stroke="#c0262a" stroke-width="1.8"/>
<path d="M343,364.8 L349,367.3 L343,369.5 Z" fill="#c0262a"/>
<path d="M304.5,367.3 L300.6,342" stroke="#1c1c6e" stroke-width="1.5"/>
<path d="M298.3,343.5 L300.1,337.8 L302.8,343 Z" fill="#1c1c6e"/>
</svg>
<div class="a" style="left:343.5px;top:115px;font-size:9.4px;font-weight:bold;color:#dc6e52;line-height:1;transform:scaleX(1.68);transform-origin:0 0;letter-spacing:0.1px">Untitled</div>
<div class="a" style="left:679px;top:350.5px;font-size:14px;font-weight:bold;color:#da6e50;line-height:1;transform:scaleX(1.25);transform-origin:0 0">01</div>



<!-- left panel -->
<div class="a" style="left:0;top:35px;width:208px;height:380px;background:#fff"></div>
<!-- printer header -->
<div class="a" style="left:0;top:35px;width:208px;height:15px;background:linear-gradient(#f4f4f4,#f7f7f7 60%,#fdfdfd)"></div>
<svg style="left:3px;top:39px" width="10" height="7"><path d="M0.5 0.5h8v6h-8z M3 0.5v6 M5 2.5h2v2h-2" stroke="#888" stroke-width="1" fill="none"/></svg>
<div class="t" style="left:17px;top:39px;color:#222">Printer</div>
<svg style="left:192px;top:38px" width="10" height="10"><path d="M0.6 5L2.8 1.2H7.2L9.4 5 7.2 8.8H2.8z" stroke="#666" stroke-width="0.9" fill="none"/><ellipse cx="5" cy="5" rx="1.8" ry="1.5" stroke="#666" stroke-width="0.9" fill="none"/></svg>
<!-- printer combo -->
<div class="a" style="left:2px;top:58px;width:177px;height:12px;border:1px solid #ededed;border-left:none"></div>
<svg style="left:4.5px;top:62.5px" width="5" height="3"><path d="M0.5 0.6l2 1.6 2-1.6" stroke="#aaa" stroke-width="0.8" fill="none"/></svg>
<div class="t" style="left:11px;top:61px;font-size:7.8px;color:#2a2a2a">MyKlipper 0.4 nozzle</div>
<svg style="left:182px;top:60px" width="9" height="8"><path d="M5.5 0.5H2.5Q0.5 0.5 0.5 2.5V5.5Q0.5 7.5 2.5 7.5H5.5Q7.5 7.5 7.5 5.5V3.5 M3.5 4.5l4-4" stroke="#666" stroke-width="0.9" fill="none"/></svg>
<svg style="left:196px;top:61px" width="8" height="5"><path d="M0.5 1.5q3.5-2 7 0 M1.5 3q2.5-1.5 5 0 M3 4.5h2" stroke="#6cc4b4" stroke-width="1" fill="none"/></svg>
<!-- bed type -->
<div class="t" style="left:4px;top:77px;color:#333">Bed type</div>
<div class="a" style="left:46px;top:72px;width:157px;height:16px;background:#f0f0f0"></div>
<svg style="left:49.5px;top:79.5px" width="5" height="3"><path d="M0.5 0.6l2 1.6 2-1.6" stroke="#bbb" stroke-width="0.8" fill="none"/></svg>
<div class="t" style="left:56.5px;top:77px;color:#aaa;font-size:7.75px">Smooth PEI Plate / High Temp Plate</div>
<!-- filament header -->
<div class="a" style="left:0;top:96px;width:208px;height:18px;background:linear-gradient(#fafafa,#f2f2f2 50%,#f6f6f6)"></div>
<svg style="left:5px;top:102px" width="8" height="7"><path d="M0.5 0.5h7v6h-7z M4 0.5v6 M1.5 2.5h1 M5 2.5h1" stroke="#999" stroke-width="1" fill="none"/></svg>
<div class="t" style="left:18px;top:102px;color:#222">Filament</div>
<svg style="left:153px;top:102px" width="7" height="7"><path d="M3.5 0v7M0 3.5h7" stroke="#666" stroke-width="1"/></svg>
<svg style="left:169px;top:104px" width="7" height="2"><path d="M0 1h7" stroke="#666" stroke-width="1"/></svg>
<svg style="left:192px;top:101px" width="10" height="10"><path d="M0.6 5L2.8 1.2H7.2L9.4 5 7.2 8.8H2.8z" stroke="#666" stroke-width="0.9" fill="none"/><ellipse cx="5" cy="5" rx="1.8" ry="1.5" stroke="#666" stroke-width="0.9" fill="none"/></svg>
<!-- filament row -->
<div class="a" style="left:3px;top:124px;width:10px;height:10px;background:#12998a"></div>
<div class="a" style="left:6px;top:125px;font-size:7px;color:#fff;line-height:1">1</div>
<div class="a" style="left:16px;top:123px;width:177px;height:12px;border:1px solid #ececec"></div>
<svg style="left:19.5px;top:127.5px" width="5" height="3"><path d="M0.5 0.6l2 1.6 2-1.6" stroke="#aaa" stroke-width="0.8" fill="none"/></svg>
<div class="t" style="left:26.7px;top:125.5px;font-size:7.1px;color:#2a2a2a">My Generic PLA</div>
<svg style="left:196px;top:125px" width="8" height="8"><path d="M5 0.5h-4.5v7h7v-4 M3.5 4.5l4-4" stroke="#888" stroke-width="1" fill="none"/></svg>
<!-- process header -->
<div class="a" style="left:0;top:144px;width:208px;height:16px;background:linear-gradient(#f3f3f3,#f4f4f4 60%,#f8f8f8)"></div>
<svg style="left:5px;top:148px" width="8" height="8"><path d="M0.5 1.5h7v5.5h-7z M0.5 3.5h7 M0.5 5.5h7 M2 0.5h5" stroke="#888" stroke-width="1" fill="none"/></svg>
<div class="t" style="left:19px;top:149px;color:#222">Process</div>
<div class="a" style="left:51px;top:147px;width:52px;height:10px;border-radius:5px;background:#dcdcdc"></div>
<div class="a" style="left:51px;top:147px;width:28px;height:10px;border-radius:5px;background:#0e8f7f"></div>
<div class="a" style="left:56px;top:149px;font-size:7px;color:#e8f6f4;line-height:1">Global</div>
<div class="a" style="left:79px;top:149px;font-size:7px;color:#999;line-height:1">Objects</div>
<div class="t" style="left:130px;top:149px;font-size:8px">Advanced</div>
<div class="a" style="left:165px;top:148px;width:15px;height:8px;border-radius:4px;background:#0e8f7f"></div>
<div class="a" style="left:172px;top:149px;width:6px;height:6px;border-radius:3px;background:#fff"></div>
<svg style="left:186px;top:148px" width="9" height="8"><path d="M0.5 0.5h8v7h-8z M4.5 0.5v7 M1.5 2.5h2 M5.5 2.5h2" stroke="#777" stroke-width="1" fill="none"/></svg>
<svg style="left:197px;top:148px" width="8" height="8"><path d="M0.5 0.5l2.5 2.5 M7.5 0.5l-2.5 2.5 M0.5 7.5l2.5-2.5 M7.5 7.5l-2.5-2.5 M0.5 0.5v2 M0.5 0.5h2" stroke="#33b39f" stroke-width="1.2" fill="none"/></svg>
<!-- preset combo -->
<div class="a" style="left:2px;top:167px;width:167px;height:11px;border:1px solid #ececec;border-left:none"></div>
<svg style="left:5.5px;top:171.5px" width="5" height="3"><path d="M0.5 0.6l2 1.6 2-1.6" stroke="#aaa" stroke-width="0.8" fill="none"/></svg>
<div class="t" style="left:13.5px;top:170px;font-size:7.65px;color:#2a2a2a">0.20mm Standard @MyKlipper</div>
<svg style="left:184px;top:169px" width="8" height="7"><path d="M0.5 0.5h5.5l1.5 1.5v4.5h-7z M2 0.5v2h3v-2 M2 6.5v-2h4v2" stroke="#777" stroke-width="1" fill="none"/></svg>
<svg style="left:197px;top:169px" width="8" height="8"><circle cx="3" cy="3" r="2.5" stroke="#777" stroke-width="1" fill="none"/><path d="M5 5l2.5 2.5" stroke="#777" stroke-width="1.2"/></svg>
<!-- tabs -->
<div class="t" style="left:5px;top:189px;color:#222;font-weight:bold;font-size:7.6px">Quality</div>
<div class="t" style="left:41px;top:189px;color:#999">Strength</div>
<div class="t" style="left:79px;top:189px;color:#999">Speed</div>
<div class="t" style="left:110px;top:189px;color:#999">Support</div>
<div class="t" style="left:148px;top:189px;color:#999">Others</div>
<div class="t" style="left:181px;top:189px;color:#999">Notes</div>
<div class="a" style="left:4px;top:197px;width:28px;height:1px;background:#d9a68c"></div>
<div class="a" style="left:0;top:198px;width:208px;height:1px;background:#efefef"></div>
<!-- scrollbar -->
<div class="a" style="left:200px;top:201.6px;width:8px;height:214px;background:#f2f2f2"></div>
<div class="a" style="left:203px;top:210.5px;width:3px;height:51px;background:#7a7a7a;border-radius:1.5px"></div>
<div class="t" style="left:12px;top:204.8px;font-weight:bold;color:#222;font-size:7.6px">Layer height</div>
<div class="t" style="left:11px;top:220px;color:#383838">Layer height</div>
<div class="inp" style="top:217.0px"><span class="v">0.2</span><span class="u">mm</span></div>
<div class="t" style="left:11px;top:235.2px;color:#383838">First layer height</div>
<div class="inp" style="top:232.0px"><span class="v">0.2</span><span class="u">mm</span></div>
<div class="t" style="left:12px;top:251px;font-weight:bold;color:#222;font-size:7.6px">Line width</div>
<div class="t" style="left:11px;top:266.8px;color:#383838">Default</div>
<div class="inp" style="top:264.0px"><span class="v">0.4</span><span class="u">mm or %</span></div>
<div class="t" style="left:11px;top:281.3px;color:#383838">First layer</div>
<div class="inp" style="top:278.6px"><span class="v">0.5</span><span class="u">mm or %</span></div>
<div class="t" style="left:11px;top:295.8px;color:#383838">Outer wall</div>
<div class="inp" style="top:293.2px"><span class="v">0.4</span><span class="u">mm or %</span></div>
<div class="t" style="left:11px;top:310.3px;color:#383838">Inner wall</div>
<div class="inp" style="top:307.8px"><span class="v">0.45</span><span class="u">mm or %</span></div>
<div class="t" style="left:11px;top:324.8px;color:#383838">Top surface</div>
<div class="inp" style="top:322.4px"><span class="v">0.4</span><span class="u">mm or %</span></div>
<div class="t" style="left:11px;top:339.3px;color:#383838">Sparse infill</div>
<div class="inp" style="top:337.0px"><span class="v">0.45</span><span class="u">mm or %</span></div>
<div class="t" style="left:11px;top:353.8px;color:#383838">Internal solid infill</div>
<div class="inp" style="top:351.4px"><span class="v">0.4</span><span class="u">mm or %</span></div>
<div class="t" style="left:11px;top:368.5px;color:#383838">Support</div>
<div class="inp" style="top:366.0px"><span class="v">0.4</span><span class="u">mm or %</span></div>
<div class="t" style="left:12px;top:384.5px;font-weight:bold;color:#222;font-size:7.6px">Seam</div>
<svg style="left:1px;top:206px" width="9" height="7"><rect x="0.5" y="0.5" width="8" height="6" fill="#777" stroke="#666"/><path d="M1 2.5h7" stroke="#bbb" stroke-width="0.6"/></svg>
<svg style="left:1px;top:252px" width="9" height="6"><rect x="0.5" y="0.5" width="8" height="5" fill="#999" stroke="#777"/><path d="M0.5 2.5h8" stroke="#ddd" stroke-width="0.6"/></svg>
<svg style="left:1px;top:384px" width="8" height="8"><rect x="0.5" y="0.5" width="7" height="7" fill="#ccc" stroke="#777"/><path d="M1.5 6.5l5-5" stroke="#999" stroke-width="1"/></svg>
<div class="t" style="left:11px;top:399.5px;color:#383838">Seam position</div>
<div class="a" style="left:120px;top:397.5px;width:61px;height:12px;border:1px solid #eeeeee;border-left:none"></div>
<svg style="left:124.5px;top:403.5px" width="5" height="3"><path d="M0.5 0.6l2 1.6 2-1.6" stroke="#aaa" stroke-width="0.8" fill="none"/></svg>
<div class="t" style="left:131px;top:401px;color:#333">Aligned</div>
<div class="a" style="left:121px;top:412px;width:8px;height:3px;background:#e6e6e6"></div>

</body></html>
